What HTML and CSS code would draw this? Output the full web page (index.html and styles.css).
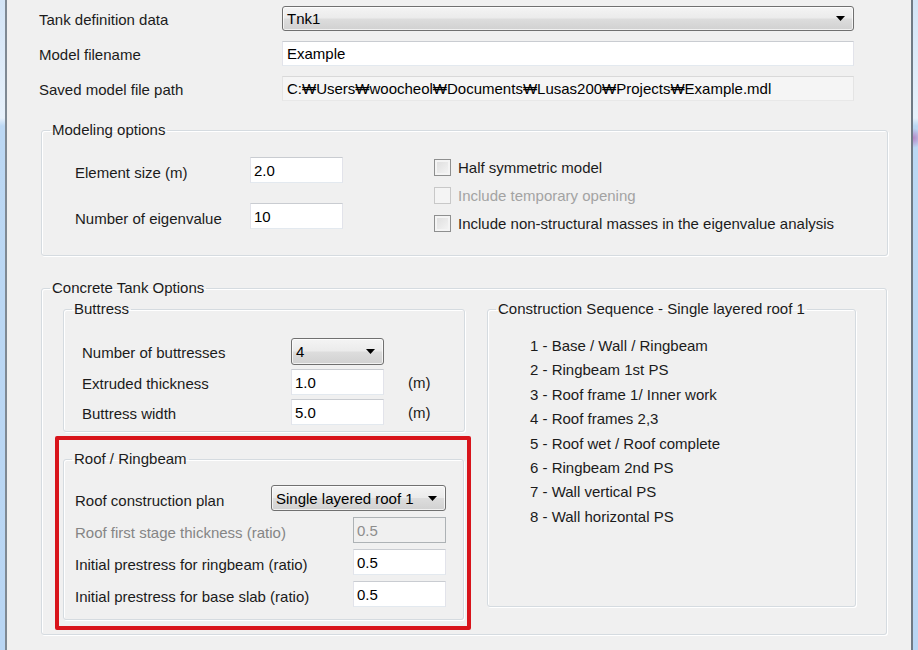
FILE: index.html
```html
<!DOCTYPE html>
<html lang="en">
<head>
    <meta charset="UTF-8">
    <title>Tank Model Options</title>
    <link rel="stylesheet" href="styles.css">
</head>
<body>
    <div class="frame-edge left"></div>
    <div class="dialog">

        <div class="top-form">
            <label>Tank definition data</label>
            <div class="combo wide">
                <span>Tnk1</span>
                <svg class="arrow" width="9" height="5" viewBox="0 0 9 5"><path d="M0 0H9L4.5 5Z" fill="#000"/></svg>
            </div>
            <label>Model filename</label>
            <div class="field">Example</div>
            <label>Saved model file path</label>
            <div class="field readonly">C:₩Users₩woocheol₩Documents₩Lusas200₩Projects₩Example.mdl</div>
        </div>

        <fieldset class="group modeling">
            <legend>Modeling options</legend>
            <div class="modeling-body">
                <div class="modeling-left">
                    <label>Element size (m)</label>
                    <div class="field small">2.0</div>
                    <label>Number of eigenvalue</label>
                    <div class="field small">10</div>
                </div>
                <div class="checks">
                    <div class="check"><span class="box"></span>Half symmetric model</div>
                    <div class="check disabled"><span class="box"></span>Include temporary opening</div>
                    <div class="check"><span class="box"></span>Include non-structural masses in the eigenvalue analysis</div>
                </div>
            </div>
        </fieldset>

        <fieldset class="group concrete">
            <legend>Concrete Tank Options</legend>
            <div class="concrete-body">
                <div class="concrete-left">
                    <fieldset class="group buttress">
                        <legend>Buttress</legend>
                        <div class="buttress-rows">
                            <label>Number of buttresses</label>
                            <div class="combo small">
                                <span>4</span>
                                <svg class="arrow" width="9" height="5" viewBox="0 0 9 5"><path d="M0 0H9L4.5 5Z" fill="#000"/></svg>
                            </div>
                            <span></span>
                            <label>Extruded thickness</label>
                            <div class="field small">1.0</div>
                            <span class="unit">(m)</span>
                            <label>Buttress width</label>
                            <div class="field small">5.0</div>
                            <span class="unit">(m)</span>
                        </div>
                    </fieldset>

                    <div class="highlight">
                        <fieldset class="group roof">
                            <legend>Roof / Ringbeam</legend>
                            <div class="roof-rows">
                                <div class="roof-row">
                                    <label>Roof construction plan</label>
                                    <div class="combo plan">
                                        <span>Single layered roof 1</span>
                                        <svg class="arrow" width="9" height="5" viewBox="0 0 9 5"><path d="M0 0H9L4.5 5Z" fill="#000"/></svg>
                                    </div>
                                </div>
                                <div class="roof-row disabled">
                                    <label>Roof first stage thickness (ratio)</label>
                                    <div class="field small off">0.5</div>
                                </div>
                                <div class="roof-row">
                                    <label>Initial prestress for ringbeam (ratio)</label>
                                    <div class="field small">0.5</div>
                                </div>
                                <div class="roof-row">
                                    <label>Initial prestress for base slab (ratio)</label>
                                    <div class="field small">0.5</div>
                                </div>
                            </div>
                        </fieldset>
                    </div>
                </div>

                <fieldset class="group sequence">
                    <legend>Construction Sequence - Single layered roof 1</legend>
                    <ul class="steps">
                        <li>1 - Base / Wall / Ringbeam</li>
                        <li>2 - Ringbeam 1st PS</li>
                        <li>3 - Roof frame 1/ Inner work</li>
                        <li>4 - Roof frames 2,3</li>
                        <li>5 - Roof wet / Roof complete</li>
                        <li>6 - Ringbeam 2nd PS</li>
                        <li>7 - Wall vertical PS</li>
                        <li>8 - Wall horizontal PS</li>
                    </ul>
                </fieldset>
            </div>
        </fieldset>

    </div>
    <div class="frame-edge right"></div>
</body>
</html>
```

FILE: styles.css
```css
body {
    margin: 0;
    height: 650px;
    display: flex;
    overflow: hidden;
    font-family: 'Liberation Sans', Arial, sans-serif;
    font-size: 15px;
    color: #1b1b1b;
    background: #f0f0f0;
}

.frame-edge {
    background: linear-gradient(#d3e4f6 0, #e7f1fb 118px, #bcd8f4 126px, #b9d6f4 100%);
}
.frame-edge.left {
    width: 5px;
    border-right: 2px solid #7f8993;
}
.frame-edge.right {
    width: 5px;
    border-left: 2px solid #6f7a85;
    background: radial-gradient(circle at 0 138px, #b686c6 0, rgba(182, 134, 198, 0) 10px),
                linear-gradient(#d3e4f6 0, #e7f1fb 118px, #bcd8f4 126px, #b9d6f4 100%);
}

.dialog {
    flex: 1;
    padding-top: 6px;
    background: #f0f0f0;
}

/* top rows */
.top-form {
    display: grid;
    grid-template-columns: 243px 572px;
    grid-auto-rows: 25px;
    row-gap: 10px;
    padding-left: 32px;
    align-items: center;
}

.top-form label {
    padding-top: 1px;
}

.field {
    box-sizing: border-box;
    height: 100%;
    display: flex;
    align-items: center;
    padding: 0 4px;
    background: #fff;
    border: 1px solid;
    border-color: #c9ccd1 #e2e3ea #e3e9ef #e2e3ea;
    color: #000;
    white-space: nowrap;
}
.field.readonly {
    background: #f5f5f5;
    border-color: #d9d9d9 #e4e4e4 #e8e8e8 #e4e4e4;
}
.field.small {
    width: 93px;
    height: 26px;
    padding-left: 3px;
}
.field.off {
    background: #f0f0f0;
    border-color: #adb2b5;
    color: #8d8d8d;
}

.combo {
    box-sizing: border-box;
    height: 25px;
    display: flex;
    align-items: center;
    justify-content: space-between;
    padding: 0 8px 0 4px;
    border: 1px solid #707070;
    border-radius: 3px;
    background: linear-gradient(#f4f4f4 0, #ebebeb 48%, #dddddd 52%, #d1d1d1 100%);
    box-shadow: inset 0 0 0 1px rgba(255, 255, 255, 0.7);
    color: #000;
}
.combo.small {
    width: 93px;
    height: 27px;
}
.combo.plan {
    width: 175px;
    height: 26px;
}

/* group boxes */
.group {
    margin: 0;
    padding: 0;
    min-width: 0;
    border: 1px solid #d5dbe0;
    border-radius: 3px;
    box-shadow: inset 1px 1px 0 #fff, 1px 1px 0 #fff;
}
.group legend {
    margin-left: 8px;
    padding: 0 2px;
    line-height: 18px;
}

.modeling {
    margin: 20px 23px 0 34px;
}
.modeling-body {
    display: flex;
    align-items: flex-start;
    padding: 14px 0 18px 33px;
}
.modeling-left {
    display: grid;
    grid-template-columns: 175px 93px;
    row-gap: 20px;
    align-items: center;
    margin-top: 4px;
}
.modeling-left label {
    padding-top: 4px;
}
.checks {
    margin-left: 91px;
}
.check {
    height: 28px;
    display: flex;
    align-items: center;
    color: #1b1b1b;
}
.check .box {
    box-sizing: border-box;
    width: 17px;
    height: 17px;
    margin-right: 7px;
    border: 1px solid #8e8f8f;
    background: linear-gradient(135deg, #dcdcdc, #f6f6f6);
    box-shadow: inset 0 0 0 2px #f4f4f4;
}
.check.disabled {
    color: #a3a3a3;
}
.check.disabled .box {
    border-color: #c8c8c8;
    background: #f4f4f4;
    box-shadow: none;
}

.concrete {
    margin: 23px 24px 0 34px;
}
.concrete-body {
    display: flex;
    align-items: flex-start;
    padding: 3px 0 4px 13px;
}
.concrete-left {
    width: 416px;
}

.buttress {
    margin: 0 6px 0 8px;
}
.buttress-rows {
    display: grid;
    grid-template-columns: 209px 93px auto;
    row-gap: 4px;
    align-items: center;
    padding: 20px 0 6px 18px;
}
.buttress-rows label {
    padding-top: 2px;
}
.unit {
    padding-left: 24px;
}

.highlight {
    margin-top: 4px;
    padding: 10px 3px 6px 4px;
    border: 4px solid #d8141b;
    border-radius: 2px;
}
.roof-rows {
    display: flex;
    flex-direction: column;
    gap: 6px;
    padding: 17px 17px 12px 11px;
}
.roof-row {
    display: flex;
    justify-content: space-between;
    align-items: center;
    height: 26px;
}
.roof-row label {
    padding-top: 4px;
}
.roof-row.disabled label {
    color: #858585;
}

.sequence {
    width: 367px;
    margin-left: 16px;
}
.steps {
    list-style: none;
    margin: 0;
    padding: 16px 0 77px 42px;
}
.steps li {
    line-height: 24.4px;
}
```
